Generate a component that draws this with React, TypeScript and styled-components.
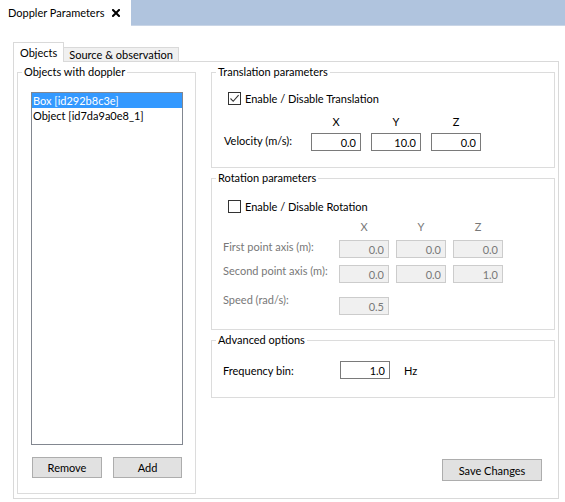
import React from "react";
import styled, { createGlobalStyle } from "styled-components";

const Global = createGlobalStyle`
  html, body { margin: 0; padding: 0; background: #ffffff; }
  body {
    font-family: Lato, "Noto Sans", "Liberation Sans", sans-serif;
    font-size: 11px;
    color: #000000;
  }
  * { box-sizing: border-box; }
`;

const Root = styled.div`
  width: 565px;
  height: 502px;
  display: flex;
  flex-direction: column;
  overflow: hidden;
  background: #ffffff;
`;

const TopBar = styled.div`
  display: flex;
  height: 26px;
  flex: none;
`;

const DocTab = styled.div`
  width: 131px;
  display: flex;
  align-items: center;
  padding: 0 11px 1px 8px;
  background: #ffffff;
  white-space: nowrap;
`;

const CloseIcon = styled.svg`
  margin-left: auto;
  flex: none;
`;

const TopFill = styled.div`
  flex: 1;
  background: #b0c4de;
  border-bottom: 1px solid #c9d5e6;
`;

const Body = styled.div`
  flex: 1;
  display: flex;
  flex-direction: column;
  padding: 16px 6px 3px 13px;
  min-height: 0;
`;

const TabRow = styled.div`
  display: flex;
  align-items: flex-end;
  height: 19px;
  flex: none;
  position: relative;
  z-index: 1;
`;

const Tab = styled.div<{ $active?: boolean }>`
  height: ${(p) => (p.$active ? "20px" : "14px")};
  margin-bottom: ${(p) => (p.$active ? "-1px" : "0")};
  padding: ${(p) => (p.$active ? "0 6px" : "0 5px")};
  display: flex;
  align-items: center;
  background: ${(p) => (p.$active ? "#ffffff" : "#f0f0f0")};
  border: 1px solid #d9d9d9;
  border-bottom: none;
  border-left: ${(p) => (p.$active ? "1px solid #d9d9d9" : "none")};
  white-space: nowrap;
`;

const Pane = styled.div`
  flex: 1;
  display: flex;
  gap: 15px;
  border: 1px solid #d9d9d9;
  padding: 2px 3px 4px 3px;
  min-height: 0;
`;

const GroupBox = styled.fieldset<{ $width?: string }>`
  margin: 0;
  min-width: 0;
  border: 1px solid #dcdcdc;
  padding: 0;
  display: flex;
  flex-direction: column;
  width: ${(p) => p.$width || "auto"};
  flex: none;
`;

const GroupContent = styled.div<{ $pad: string; $grow?: boolean }>`
  display: flex;
  flex-direction: column;
  padding: ${(p) => p.$pad};
  flex: ${(p) => (p.$grow ? 1 : "none")};
  min-height: 0;
`;

const Legend = styled.legend`
  padding: 0 2px;
  margin-left: 4px;
  line-height: 16px;
`;

const ListBox = styled.div`
  flex: 1;
  border: 1px solid #828790;
  background: #ffffff;
  margin-bottom: 12px;
`;

const ListItem = styled.div<{ $selected?: boolean }>`
  height: 15px;
  line-height: 15px;
  padding-left: 1px;
  white-space: nowrap;
  background: ${(p) => (p.$selected ? "#3399ff" : "transparent")};
  color: ${(p) => (p.$selected ? "#ffffff" : "#000000")};
`;

const ButtonRow = styled.div`
  display: flex;
  justify-content: space-between;
  padding: 0 1px;
`;

const Button = styled.button<{ $w: number; $h?: number }>`
  width: ${(p) => p.$w}px;
  height: ${(p) => p.$h || 21}px;
  background: #e1e1e1;
  border: 1px solid #adadad;
  border-radius: 0;
  padding: 0;
  font: inherit;
  color: #000000;
`;

const RightCol = styled.div`
  flex: 1;
  display: flex;
  flex-direction: column;
  gap: 2px;
  min-width: 0;
`;

const CheckRow = styled.label`
  display: flex;
  align-items: center;
  gap: 4px;
  height: 15px;
  padding-left: 16px;
`;

const CheckBox = styled.span`
  width: 13px;
  height: 13px;
  border: 1px solid #333333;
  background: #ffffff;
  display: flex;
  align-items: center;
  justify-content: center;
  flex: none;
`;

const FieldGrid = styled.div<{ $label: number; $gap: number; $left: number; $top: number }>`
  display: grid;
  grid-template-columns: ${(p) => p.$label}px repeat(3, 50px);
  column-gap: ${(p) => p.$gap}px;
  margin-left: ${(p) => p.$left}px;
  margin-top: ${(p) => p.$top}px;
  align-items: center;
`;

const Header = styled.div<{ $disabled?: boolean }>`
  text-align: center;
  line-height: 14px;
  color: ${(p) => (p.$disabled ? "#787878" : "#000000")};
`;

const FieldLabel = styled.div<{ $disabled?: boolean }>`
  white-space: nowrap;
  color: ${(p) => (p.$disabled ? "#787878" : "#000000")};
`;

const Cell = styled.input<{ $disabled?: boolean; $mt?: number }>`
  width: 50px;
  height: 18px;
  margin-top: ${(p) => p.$mt || 0}px;
  border: 1px solid ${(p) => (p.$disabled ? "#cccccc" : "#7a7a7a")};
  background: ${(p) => (p.$disabled ? "#f0f0f0" : "#ffffff")};
  color: ${(p) => (p.$disabled ? "#787878" : "#000000")};
  text-align: right;
  padding: 0 4px 0 2px;
  font: inherit;
  outline: none;
`;

const Spacer = styled.div`
  grid-column: 1;
`;

const FreqRow = styled.div`
  display: flex;
  align-items: center;
  margin: 13px 0 0 11px;
`;

const FreqLabel = styled.div`
  width: 117px;
`;

const Unit = styled.span`
  margin-left: 14px;
`;

const SaveButton = styled(Button)`
  align-self: flex-end;
  margin: auto 13px 13px 0;
`;

const Check = () => (
  <svg width="11" height="11" viewBox="0 0 11 11">
    <path d="M1.5 5.5 L4.2 8.3 L9.6 2.2" fill="none" stroke="#333333" strokeWidth="1.1" />
  </svg>
);

export default function App() {
  return (
    <Root>
      <Global />
      <TopBar>
        <DocTab>
          Doppler Parameters
          <CloseIcon width="8" height="8" viewBox="0 0 8 8">
            <path d="M1 1 L7 7 M7 1 L1 7" stroke="#000000" strokeWidth="2" strokeLinecap="square" />
          </CloseIcon>
        </DocTab>
        <TopFill />
      </TopBar>
      <Body>
        <TabRow>
          <Tab $active>Objects</Tab>
          <Tab>Source &amp; observation</Tab>
        </TabRow>
        <Pane>
          <GroupBox $width="179px">
            <Legend>Objects with doppler</Legend>
            <GroupContent $pad="12px 12px 15px 13px" $grow>
              <ListBox>
                <ListItem $selected>Box [id292b8c3e]</ListItem>
                <ListItem>Object [id7da9a0e8_1]</ListItem>
              </ListBox>
              <ButtonRow>
                <Button $w={70}>Remove</Button>
                <Button $w={69}>Add</Button>
              </ButtonRow>
            </GroupContent>
          </GroupBox>
          <RightCol>
            <GroupBox>
              <Legend>Translation parameters</Legend>
              <GroupContent $pad="11px 0 16px 0">
                <CheckRow>
                  <CheckBox>
                    <Check />
                  </CheckBox>
                  Enable / Disable Translation
                </CheckRow>
                <FieldGrid $label={77} $gap={10} $left={12} $top={9}>
                  <Spacer />
                  <Header>X</Header>
                  <Header>Y</Header>
                  <Header>Z</Header>
                  <FieldLabel>Velocity (m/s):</FieldLabel>
                  <Cell $mt={4} readOnly defaultValue="0.0" />
                  <Cell $mt={4} readOnly defaultValue="10.0" />
                  <Cell $mt={4} readOnly defaultValue="0.0" />
                </FieldGrid>
              </GroupContent>
            </GroupBox>
            <GroupBox>
              <Legend>Rotation parameters</Legend>
              <GroupContent $pad="13px 0 14px 0">
                <CheckRow>
                  <CheckBox />
                  Enable / Disable Rotation
                </CheckRow>
                <FieldGrid $label={109} $gap={7} $left={11} $top={6}>
                  <Spacer />
                  <Header $disabled>X</Header>
                  <Header $disabled>Y</Header>
                  <Header $disabled>Z</Header>
                  <FieldLabel $disabled>First point axis (m):</FieldLabel>
                  <Cell $mt={6} $disabled readOnly defaultValue="0.0" />
                  <Cell $mt={6} $disabled readOnly defaultValue="0.0" />
                  <Cell $mt={6} $disabled readOnly defaultValue="0.0" />
                  <FieldLabel $disabled>Second point axis (m):</FieldLabel>
                  <Cell $mt={7} $disabled readOnly defaultValue="0.0" />
                  <Cell $mt={7} $disabled readOnly defaultValue="0.0" />
                  <Cell $mt={7} $disabled readOnly defaultValue="1.0" />
                  <FieldLabel $disabled>Speed (rad/s):</FieldLabel>
                  <Cell $mt={14} $disabled readOnly defaultValue="0.5" />
                </FieldGrid>
              </GroupContent>
            </GroupBox>
            <GroupBox>
              <Legend>Advanced options</Legend>
              <GroupContent $pad="0 0 18px 0">
                <FreqRow>
                  <FreqLabel>Frequency bin:</FreqLabel>
                  <Cell readOnly defaultValue="1.0" />
                  <Unit>Hz</Unit>
                </FreqRow>
              </GroupContent>
            </GroupBox>
            <SaveButton $w={100} $h={22}>
              Save Changes
            </SaveButton>
          </RightCol>
        </Pane>
      </Body>
    </Root>
  );
}
